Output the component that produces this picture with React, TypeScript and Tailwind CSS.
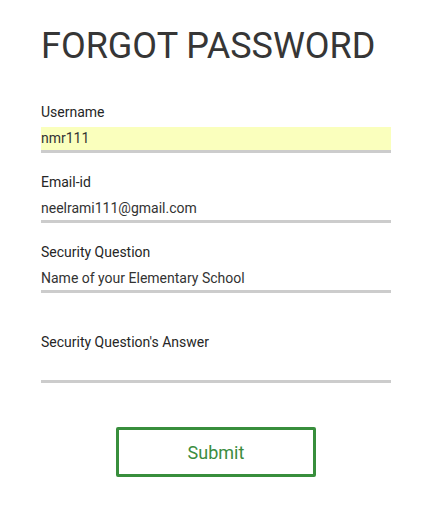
import React from "react";

function Field({ label, value, highlight, className }: { label: string; value: string; highlight?: boolean; className?: string }) {
  return (
    <div className={"flex flex-col " + (className ?? "")}>
      <div className="h-[20px] text-[14px] leading-[20px] font-normal text-[#262626]">{label}</div>
      <div
        className={
          "mt-[5px] h-[26px] border-b-[3px] border-[#cccccc] flex items-center text-[14px] text-[#333333] " +
          (highlight ? "bg-[#faffbd]" : "")
        }
      >
        {value}
      </div>
    </div>
  );
}

export default function App() {
  return (
    <div className="w-[438px] h-[512px] bg-white" style={{ fontFamily: "Roboto, 'Noto Sans', sans-serif" }}>
      <div className="pl-[41px] pt-[25px] w-[391px]">
        <h1 className="text-[36px] leading-[42px] font-normal text-[#363636] whitespace-nowrap">FORGOT PASSWORD</h1>
        <Field className="mt-[35px]" label="Username" value="nmr111" highlight />
        <Field className="mt-[19px]" label="Email-id" value="neelrami111@gmail.com" />
        <Field className="mt-[19px]" label="Security Question" value="Name of your Elementary School" />
        <Field className="mt-[39px]" label="Security Question's Answer" value="" />
        <div className="flex justify-center mt-[44px]">
          <button className="w-[200px] h-[50px] border-[3px] border-[#388e3c] rounded-[2px] text-[18px] text-[#3c8c40] bg-white">
            Submit
          </button>
        </div>
      </div>
    </div>
  );
}
